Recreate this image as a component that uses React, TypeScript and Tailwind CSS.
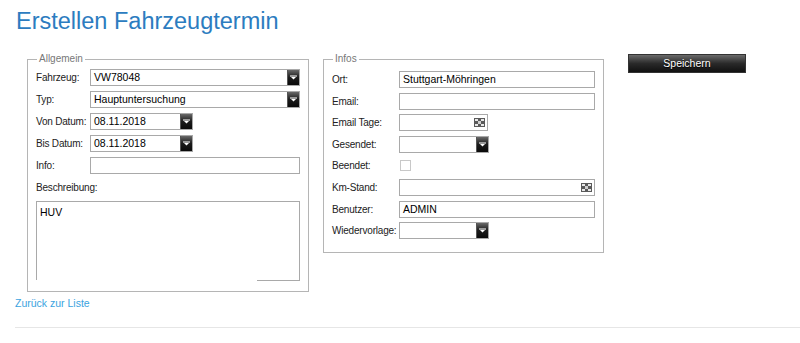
import React from "react";

const font = { fontFamily: '"Liberation Sans", Arial, sans-serif' };

const DropButton = () => (
  <div className="w-[12px] h-[15px] bg-gradient-to-b from-[#6a6a6a] via-[#1c1c1c] to-[#0a0a0a] flex items-center justify-center border-l border-[#555]">
    <svg width="7" height="5" viewBox="0 0 7 5">
      <rect x="0" y="0" width="7" height="2" fill="#9a9a9a" />
      <path d="M1 2 L6 2 L3.5 4.5 Z" fill="#ffffff" />
    </svg>
  </div>
);

const SpinIcon = () => (
  <svg width="11" height="9" viewBox="0 0 11 9" className="mr-[2px]">
    <rect x="0" y="0" width="11" height="9" fill="#5a5a5a" />
    <rect x="1" y="1" width="3" height="2" fill="#e8e8e8" />
    <rect x="7" y="1" width="3" height="2" fill="#e8e8e8" />
    <rect x="4" y="3" width="3" height="3" fill="#cfcfcf" />
    <rect x="1" y="6" width="3" height="2" fill="#e8e8e8" />
    <rect x="7" y="6" width="3" height="2" fill="#e8e8e8" />
  </svg>
);

type FieldProps = { value?: string; width: string; kind?: "text" | "select" | "spin" };

const Field: React.FC<FieldProps> = ({ value = "", width, kind = "text" }) => (
  <div
    className={`${width} h-[17px] border border-[#a9a9a9] bg-white flex items-center justify-between`}
  >
    <span className="pl-[3px] text-[10.5px] text-black leading-none whitespace-nowrap">{value}</span>
    {kind === "select" && <DropButton />}
    {kind === "spin" && <SpinIcon />}
  </div>
);

const Row: React.FC<{ label: string; labelW: string; children: React.ReactNode }> = ({
  label,
  labelW,
  children,
}) => (
  <div className="flex items-center h-[17px]">
    <span className={`${labelW} text-[10px] tracking-[-0.2px] text-[#222] shrink-0 whitespace-nowrap`}>{label}</span>
    {children}
  </div>
);

export default function App() {
  return (
    <div className="w-[800px] h-[343px] bg-white overflow-hidden" style={font}>
      <div className="pl-[16px] pt-[6px]">
        <h1 className="text-[23.5px] leading-[30px] text-[#2c7cc0]">Erstellen Fahrzeugtermin</h1>
      </div>

      <div className="flex items-start pl-[27px] mt-[18px]">
        <fieldset className="w-[281px] border border-[#b5b5b5] px-[8px] pt-[5px] pb-[10px]">
          <legend className="text-[10px] text-[#777] px-[2px] ml-[1px] leading-[10px]">Allgemein</legend>
          <div className="flex flex-col gap-[5px]">
            <Row label="Fahrzeug:" labelW="w-[54px]">
              <Field value="VW78048" width="w-[210px]" kind="select" />
            </Row>
            <Row label="Typ:" labelW="w-[54px]">
              <Field value="Hauptuntersuchung" width="w-[210px]" kind="select" />
            </Row>
            <Row label="Von Datum:" labelW="w-[54px]">
              <Field value="08.11.2018" width="w-[103px]" kind="select" />
            </Row>
            <Row label="Bis Datum:" labelW="w-[54px]">
              <Field value="08.11.2018" width="w-[103px]" kind="select" />
            </Row>
            <Row label="Info:" labelW="w-[54px]">
              <Field width="w-[210px]" />
            </Row>
            <div className="h-[17px] flex items-center text-[10px] tracking-[-0.2px] text-[#222]">Beschreibung:</div>
            <div className="w-[264px] h-[80px] flex flex-col">
              <div className="flex-1 border-t border-x border-[#a9a9a9] pl-[3px] pt-[3px] text-[10.5px] text-black">
                HUV
              </div>
              <div className="flex justify-end">
                <div className="w-[43px] border-b border-[#a9a9a9]" />
              </div>
            </div>
          </div>
        </fieldset>

        <fieldset className="w-[281px] ml-[14px] border border-[#b5b5b5] pl-[8px] pr-[8px] pt-[7px] pb-[13px]">
          <legend className="text-[10px] text-[#777] px-[2px] ml-[1px] leading-[10px]">Infos</legend>
          <div className="flex flex-col gap-[4.6px]">
            <Row label="Ort:" labelW="w-[67px]">
              <Field value="Stuttgart-Möhringen" width="w-[196px]" />
            </Row>
            <Row label="Email:" labelW="w-[67px]">
              <Field width="w-[196px]" />
            </Row>
            <Row label="Email Tage:" labelW="w-[67px]">
              <Field width="w-[89px]" kind="spin" />
            </Row>
            <Row label="Gesendet:" labelW="w-[67px]">
              <Field width="w-[90px]" kind="select" />
            </Row>
            <Row label="Beendet:" labelW="w-[67px]">
              <div className="ml-[1px] w-[11px] h-[11px] border border-[#c8c8c8] bg-white" />
            </Row>
            <Row label="Km-Stand:" labelW="w-[67px]">
              <Field width="w-[196px]" kind="spin" />
            </Row>
            <Row label="Benutzer:" labelW="w-[67px]">
              <Field value="ADMIN" width="w-[196px]" />
            </Row>
            <Row label="Wiedervorlage:" labelW="w-[67px]">
              <Field width="w-[90px]" kind="select" />
            </Row>
          </div>
        </fieldset>

        <button className="ml-[24px] mt-[0px] w-[118px] h-[19px] border border-[#333] bg-gradient-to-b from-[#6b6b6b] via-[#2a2a2a] to-[#111] text-white text-[10.5px] leading-none [text-shadow:0_1px_1px_#000]">
          Speichern
        </button>
      </div>

      <div className="pl-[15px] mt-[-2px]">
        <a className="text-[10.5px] text-[#3ba3e0]">Zurück zur Liste</a>
      </div>
      <div className="ml-[15px] mt-[13px] border-t border-[#e6e6e6]" />
    </div>
  );
}
